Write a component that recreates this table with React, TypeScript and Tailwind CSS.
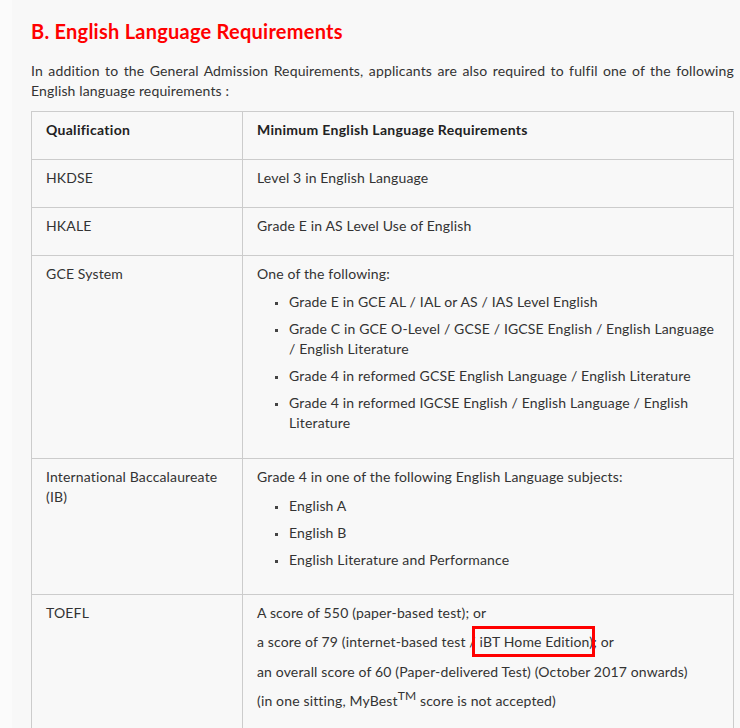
import React from "react";

const Bullet = ({ children }: { children: React.ReactNode }) => (
  <li className="flex mb-[7px]">
    <span className="w-[3px] h-[3px] bg-[#444] shrink-0 ml-[18px] mr-[11px] mt-[10px]" />
    <span>{children}</span>
  </li>
);

const td = "border border-[#cccccc] align-top pt-[8px] pb-[19px] px-[14px]";

export default function App() {
  return (
    <div
      className="min-h-[728px] w-[740px] bg-[#f8f8f8] flex text-[14px] leading-[20px] tracking-[0.15px] text-[#333333]"
      style={{ fontFamily: "Lato, 'Open Sans', sans-serif" }}
    >
      <div className="w-[12px] shrink-0 bg-[#fbfbfb]" />
      <div className="flex-1 pl-[19px] pr-[6px] pt-[17px]">
        <h2 className="text-[20px] leading-[28px] font-bold tracking-[0.25px] text-[#ff0000]">
          B. English Language Requirements
        </h2>
        <p className="mt-[16px] text-justify">
          In addition to the General Admission Requirements, applicants are also required to fulfil one of the following
          English language requirements :
        </p>
        <table className="mt-[10px] w-full border-collapse">
          <tbody>
            <tr>
              <th className={`${td} w-[211px] text-left font-bold tracking-[0.3px] text-[#222]`}>Qualification</th>
              <th className={`${td} text-left font-bold tracking-[0.3px] text-[#222]`}>
                Minimum English Language Requirements
              </th>
            </tr>
            <tr>
              <td className={td}>HKDSE</td>
              <td className={td}>Level 3 in English Language</td>
            </tr>
            <tr>
              <td className={td}>HKALE</td>
              <td className={td}>Grade E in AS Level Use of English</td>
            </tr>
            <tr>
              <td className={td}>GCE System</td>
              <td className={`${td} !pb-[18px]`}>
                <p className="mb-[8px]">One of the following:</p>
                <ul>
                  <Bullet>Grade E in GCE AL / IAL or AS / IAS Level English</Bullet>
                  <Bullet>Grade C in GCE O-Level / GCSE / IGCSE English / English Language / English Literature</Bullet>
                  <Bullet>Grade 4 in reformed GCSE English Language / English Literature</Bullet>
                  <Bullet>Grade 4 in reformed IGCSE English / English Language / English Literature</Bullet>
                </ul>
              </td>
            </tr>
            <tr>
              <td className={td}>International Baccalaureate (IB)</td>
              <td className={`${td} !pb-[17px]`}>
                <p className="mb-[9px]">Grade 4 in one of the following English Language subjects:</p>
                <ul>
                  <Bullet>English A</Bullet>
                  <Bullet>English B</Bullet>
                  <Bullet>English Literature and Performance</Bullet>
                </ul>
              </td>
            </tr>
            <tr>
              <td className={td}>TOEFL</td>
              <td className={td}>
                <p className="mb-[9px]">A score of 550 (paper-based test); or</p>
                <p className="mb-[9.5px]">
                  a score of 79 (internet-based test /{" "}
                  <span className="relative">
                    iBT Home Edition)
                    <span className="absolute left-[-8px] right-[-2px] top-[-7px] bottom-[-7px] border-[3px] border-[#ff0000]" />
                  </span>
                  ; or
                </p>
                <p className="mb-[9px]">an overall score of 60 (Paper-delivered Test) (October 2017 onwards)</p>
                <p className="mb-[9.5px]">
                  (in one sitting, MyBest<sup className="text-[12px]">TM</sup> score is not accepted)
                </p>
              </td>
            </tr>
          </tbody>
        </table>
      </div>
    </div>
  );
}
